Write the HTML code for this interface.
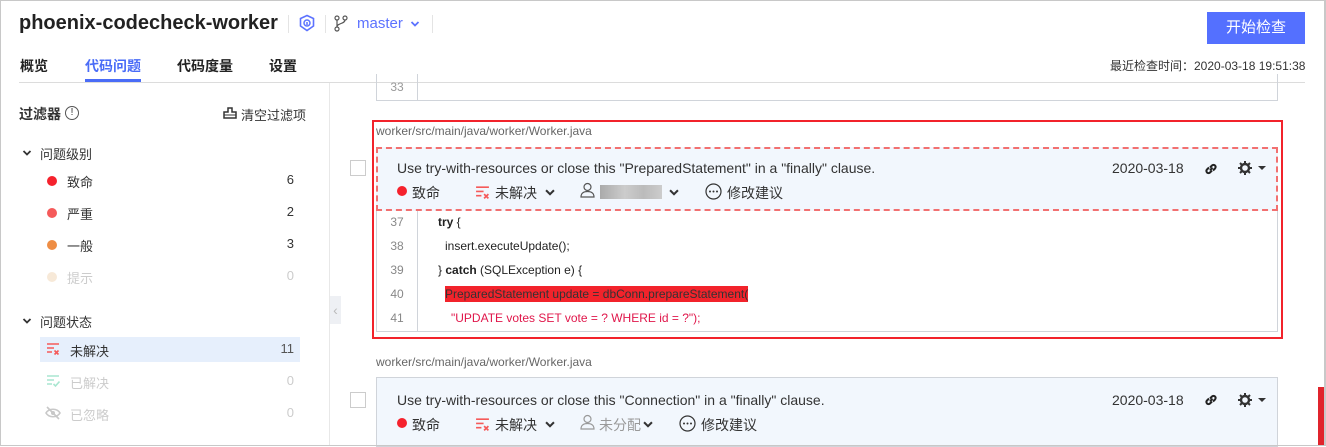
<!DOCTYPE html>
<html><head><meta charset="utf-8"><style>
*{box-sizing:border-box;margin:0;padding:0}
body{width:1326px;height:446px;overflow:hidden;background:#fff;font-family:"Liberation Sans","Noto Sans CJK SC",sans-serif;color:#333;position:relative;font-size:13px}
.a{position:absolute;white-space:nowrap}
.frame{position:absolute;left:0;top:0;width:1326px;height:446px;border:1px solid #c8c8c8;border-right:2px solid #c8c8c8}
.dot{position:absolute;width:10px;height:10px;border-radius:50%}
.cnt{position:absolute;left:280px;width:14px;text-align:right;font-size:13px}
.ln{position:absolute;left:377px;width:40px;text-align:center;color:#888;font-size:12px}
.code{position:absolute;font-size:12px;color:#222}
</style></head><body>
<div class="a" style="left:19px;top:12px;font-size:20px;font-weight:bold;color:#222">phoenix-codecheck-worker</div>
<div class="a" style="left:288px;top:15px;width:1px;height:18px;background:#e4e4e4"></div>
<svg class="a" style="left:298px;top:14px" width="18" height="18" viewBox="0 0 18 18"><path d="M9 1.5L15.5 4.5V12L9 16.5L2.5 12V4.5Z" fill="none" stroke="#5c72ff" stroke-width="1.6"/><circle cx="9" cy="9" r="3" fill="none" stroke="#5c72ff" stroke-width="1.5"/><path d="M9 8v3" stroke="#5c72ff" stroke-width="1.5"/></svg>
<div class="a" style="left:325px;top:15px;width:1px;height:18px;background:#e4e4e4"></div>
<svg class="a" style="left:334px;top:15px" width="14" height="17" viewBox="0 0 14 17"><circle cx="3" cy="3" r="2" fill="none" stroke="#555" stroke-width="1.2"/><circle cx="3" cy="14" r="2" fill="none" stroke="#555" stroke-width="1.2"/><circle cx="11" cy="3" r="2" fill="none" stroke="#555" stroke-width="1.2"/><path d="M3 5v7M11 5c0 4-8 3-8 7" fill="none" stroke="#555" stroke-width="1.2"/></svg>
<div class="a" style="left:357px;top:15px;font-size:15px;color:#5c72ff">master</div>
<svg class="a" style="left:410px;top:20px" width="10" height="8" viewBox="0 0 10 8"><path d="M1.5 2l3.5 3.5L8.5 2" fill="none" stroke="#5c72ff" stroke-width="1.8"/></svg>
<div class="a" style="left:432px;top:15px;width:1px;height:18px;background:#e4e4e4"></div>
<div class="a" style="left:1207px;top:12px;width:98px;height:32px;background:#5470ff;color:#fff;font-size:15px;text-align:center;line-height:32px">开始检查</div>
<div class="a" style="left:20px;top:56px;font-size:14px;font-weight:bold;color:#222">概览</div>
<div class="a" style="left:85px;top:56px;font-size:14px;font-weight:bold;color:#4a6cf7">代码问题</div>
<div class="a" style="left:85px;top:79px;width:56px;height:3px;background:#4a6cf7"></div>
<div class="a" style="left:177px;top:56px;font-size:14px;font-weight:bold;color:#222">代码度量</div>
<div class="a" style="left:269px;top:56px;font-size:14px;font-weight:bold;color:#222">设置</div>
<div class="a" style="left:1110px;top:57px;font-size:12px;color:#333">最近检查时间：2020-03-18 19:51:38</div>
<div class="a" style="left:19px;top:82px;width:1286px;height:1px;background:#dcdcdc"></div>
<div class="a" style="left:329px;top:83px;width:1px;height:363px;background:#e8e8e8"></div>
<div class="a" style="left:330px;top:296px;width:11px;height:28px;background:#eef0f4;color:#bbb;font-size:14px;line-height:28px;text-align:center">‹</div>
<!-- sidebar -->
<div class="a" style="left:19px;top:104px;font-size:14px;font-weight:bold;color:#333">过滤器</div>
<div class="a" style="left:65px;top:106px;width:14px;height:14px;border:1px solid #555;border-radius:50%;font-size:10px;text-align:center;line-height:12px">!</div>
<svg class="a" style="left:223px;top:107px" width="14" height="12" viewBox="0 0 14 12"><path d="M5 1h4v4H13v6H1V5h4z" fill="none" stroke="#333" stroke-width="1.5"/><path d="M1 8h12" stroke="#333"/></svg>
<div class="a" style="left:241px;top:105px;font-size:13px;color:#333">清空过滤项</div>
<svg class="a" style="left:22px;top:149px" width="10" height="8" viewBox="0 0 10 8"><path d="M1.5 2l3.5 3.5L8.5 2" fill="none" stroke="#333" stroke-width="1.8"/></svg>
<div class="a" style="left:40px;top:144px;font-size:13px;color:#333">问题级别</div>
<div class="dot" style="left:47px;top:176px;background:#f5222d"></div><div class="a" style="left:67px;top:172px;font-size:13px">致命</div><div class="cnt" style="top:172px">6</div>
<div class="dot" style="left:47px;top:208px;background:#f55a5a"></div><div class="a" style="left:67px;top:204px;font-size:13px">严重</div><div class="cnt" style="top:204px">2</div>
<div class="dot" style="left:47px;top:240px;background:#ee8d44"></div><div class="a" style="left:67px;top:236px;font-size:13px">一般</div><div class="cnt" style="top:236px">3</div>
<div class="dot" style="left:47px;top:272px;background:#f7e9d8"></div><div class="a" style="left:67px;top:268px;font-size:13px;color:#ccc">提示</div><div class="cnt" style="top:268px;color:#ccc">0</div>
<svg class="a" style="left:22px;top:317px" width="10" height="8" viewBox="0 0 10 8"><path d="M1.5 2l3.5 3.5L8.5 2" fill="none" stroke="#333" stroke-width="1.8"/></svg>
<div class="a" style="left:40px;top:312px;font-size:13px;color:#333">问题状态</div>
<div class="a" style="left:40px;top:337px;width:260px;height:25px;background:#e6effc"></div>
<svg class="a" style="left:46px;top:342px" width="14" height="14" viewBox="0 0 14 14"><path d="M1 2h12M1 6h7M1 10h5" stroke="#f55a5a" stroke-width="1.5"/><path d="M8.5 8.5l4 4M12.5 8.5l-4 4" stroke="#f55a5a" stroke-width="1.6"/></svg>
<div class="a" style="left:70px;top:341px;font-size:13px">未解决</div><div class="cnt" style="top:341px;color:#555">11</div>
<svg class="a" style="left:46px;top:374px" width="14" height="14" viewBox="0 0 14 14"><path d="M1 2h12M1 6h7M1 10h5" stroke="#a8e6d0" stroke-width="1.5"/><path d="M7.5 10l2 2 4-4.5" fill="none" stroke="#a8e6d0" stroke-width="1.6"/></svg>
<div class="a" style="left:70px;top:373px;font-size:13px;color:#ccc">已解决</div><div class="cnt" style="top:373px;color:#ccc">0</div>
<svg class="a" style="left:45px;top:406px" width="16" height="14" viewBox="0 0 16 14"><path d="M1 7c3-5 11-5 14 0c-3 5-11 5-14 0z" fill="none" stroke="#c8c8c8" stroke-width="1.6"/><circle cx="8" cy="7" r="2" fill="#c8c8c8"/><path d="M2 1l12 12" stroke="#c8c8c8" stroke-width="1.6"/></svg>
<div class="a" style="left:70px;top:405px;font-size:13px;color:#ccc">已忽略</div><div class="cnt" style="top:405px;color:#ccc">0</div>
<!-- main -->
<div class="a" style="left:376px;top:74px;width:902px;height:27px;border:1px solid #d0d4da;border-top:none"></div>
<div class="a" style="left:417px;top:74px;width:1px;height:26px;background:#d0d4da"></div>
<div class="a" style="left:377px;top:80px;width:40px;text-align:center;color:#999;font-size:12px">33</div>
<div class="a" style="left:372px;top:120px;width:911px;height:219px;border:2px solid #f2232b"></div>
<div class="a" style="left:376px;top:124px;font-size:12px;color:#666">worker/src/main/java/worker/Worker.java</div>
<div class="a" style="left:350px;top:160px;width:16px;height:16px;border:1px solid #ccc;background:#fff"></div>
<div class="a" style="left:376px;top:210px;width:902px;height:122px;border:1px solid #d0d4da;border-top:none"></div>
<div class="a" style="left:417px;top:210px;width:1px;height:121px;background:#d0d4da"></div>
<div class="a" style="left:376px;top:147px;width:902px;height:64px;background:#f2f7fd;border:2px dashed #f27070"></div>
<div class="a" style="left:397px;top:160px;font-size:14px;color:#333">Use try-with-resources or close this "PreparedStatement" in a "finally" clause.</div>
<div class="a" style="left:1112px;top:160px;font-size:14px;color:#333">2020-03-18</div>
<svg class="a" style="left:1203px;top:161px" width="16" height="16" viewBox="0 0 16 16"><path d="M7 9.5l2.5-3M6 6.5L4 8.5a2.1 2.1 0 003 3l2-2M10 9.5l2-2a2.1 2.1 0 00-3-3L7 6.5" fill="none" stroke="#222" stroke-width="2"/></svg>
<svg class="a" style="left:1237px;top:160px" width="30" height="16" viewBox="0 0 30 16"><circle cx="8" cy="8" r="4" fill="none" stroke="#333" stroke-width="2.4"/><path d="M8 1v3M8 12v3M1 8h3M12 8h3M3 3l2 2M11 11l2 2M13 3l-2 2M5 11l-2 2" stroke="#333" stroke-width="2"/><path d="M21 6h8l-4 4z" fill="#333"/></svg>
<div class="dot" style="left:397px;top:186px;background:#f5222d"></div>
<div class="a" style="left:412px;top:183px;font-size:14px">致命</div>
<svg class="a" style="left:475px;top:185px" width="15" height="15" viewBox="0 0 14 14"><path d="M1 2h12M1 6h7M1 10h5" stroke="#f55a5a" stroke-width="1.5"/><path d="M8.5 8.5l4 4M12.5 8.5l-4 4" stroke="#f55a5a" stroke-width="1.6"/></svg>
<div class="a" style="left:495px;top:183px;font-size:14px">未解决</div>
<svg class="a" style="left:544px;top:188px" width="12" height="9" viewBox="0 0 10 8"><path d="M1.5 2l3.5 3.5L8.5 2" fill="none" stroke="#333" stroke-width="1.8"/></svg>
<svg class="a" style="left:580px;top:182px" width="15" height="16" viewBox="0 0 15 16"><circle cx="7.5" cy="5" r="3.5" fill="none" stroke="#555" stroke-width="1.2"/><path d="M1 15c0-4 3-5.5 6.5-5.5S14 11 14 15z" fill="none" stroke="#555" stroke-width="1.2"/></svg>
<div class="a" style="left:600px;top:185px;width:62px;height:14px;background:linear-gradient(90deg,#aaa,#ccc 40%,#bbb 70%,#ccc)"></div>
<svg class="a" style="left:668px;top:188px" width="12" height="9" viewBox="0 0 10 8"><path d="M1.5 2l3.5 3.5L8.5 2" fill="none" stroke="#333" stroke-width="1.8"/></svg>
<svg class="a" style="left:705px;top:183px" width="17" height="17" viewBox="0 0 17 17"><circle cx="8.5" cy="8.5" r="7.5" fill="none" stroke="#333" stroke-width="1.2"/><circle cx="5" cy="8.5" r="1" fill="#333"/><circle cx="8.5" cy="8.5" r="1" fill="#333"/><circle cx="12" cy="8.5" r="1" fill="#333"/></svg>
<div class="a" style="left:727px;top:183px;font-size:14px">修改建议</div>
<div class="ln" style="top:215px">37</div><div class="code" style="left:438px;top:215px"><b>try</b> {</div>
<div class="ln" style="top:239px">38</div><div class="code" style="left:445px;top:239px">insert.executeUpdate();</div>
<div class="ln" style="top:263px">39</div><div class="code" style="left:438px;top:263px">} <b>catch</b> (SQLException e) {</div>
<div class="ln" style="top:287px">40</div><div class="code" style="left:445px;top:286px;background:#f2232b;color:#333;padding:1px 0">PreparedStatement update = dbConn.prepareStatement(</div>
<div class="ln" style="top:311px">41</div><div class="code" style="left:451px;top:311px;color:#e0174b">"UPDATE votes SET vote = ? WHERE id = ?");</div>
<!-- second -->
<div class="a" style="left:376px;top:355px;font-size:12px;color:#666">worker/src/main/java/worker/Worker.java</div>
<div class="a" style="left:350px;top:392px;width:16px;height:16px;border:1px solid #ccc;background:#fff"></div>
<div class="a" style="left:376px;top:377px;width:902px;height:70px;background:#f2f7fd;border:1px solid #d0d4da"></div>
<div class="a" style="left:397px;top:392px;font-size:14px;color:#333">Use try-with-resources or close this "Connection" in a "finally" clause.</div>
<div class="a" style="left:1112px;top:392px;font-size:14px;color:#333">2020-03-18</div>
<svg class="a" style="left:1203px;top:392px" width="16" height="16" viewBox="0 0 16 16"><path d="M7 9.5l2.5-3M6 6.5L4 8.5a2.1 2.1 0 003 3l2-2M10 9.5l2-2a2.1 2.1 0 00-3-3L7 6.5" fill="none" stroke="#222" stroke-width="2"/></svg>
<svg class="a" style="left:1237px;top:392px" width="30" height="16" viewBox="0 0 30 16"><circle cx="8" cy="8" r="4" fill="none" stroke="#333" stroke-width="2.4"/><path d="M8 1v3M8 12v3M1 8h3M12 8h3M3 3l2 2M11 11l2 2M13 3l-2 2M5 11l-2 2" stroke="#333" stroke-width="2"/><path d="M21 6h8l-4 4z" fill="#333"/></svg>
<div class="dot" style="left:397px;top:418px;background:#f5222d"></div>
<div class="a" style="left:412px;top:415px;font-size:14px">致命</div>
<svg class="a" style="left:475px;top:417px" width="15" height="15" viewBox="0 0 14 14"><path d="M1 2h12M1 6h7M1 10h5" stroke="#f55a5a" stroke-width="1.5"/><path d="M8.5 8.5l4 4M12.5 8.5l-4 4" stroke="#f55a5a" stroke-width="1.6"/></svg>
<div class="a" style="left:495px;top:415px;font-size:14px">未解决</div>
<svg class="a" style="left:544px;top:420px" width="12" height="9" viewBox="0 0 10 8"><path d="M1.5 2l3.5 3.5L8.5 2" fill="none" stroke="#333" stroke-width="1.8"/></svg>
<svg class="a" style="left:580px;top:414px" width="15" height="16" viewBox="0 0 15 16"><circle cx="7.5" cy="5" r="3.5" fill="none" stroke="#999" stroke-width="1.2"/><path d="M1 15c0-4 3-5.5 6.5-5.5S14 11 14 15z" fill="none" stroke="#999" stroke-width="1.2"/></svg>
<div class="a" style="left:599px;top:415px;font-size:14px;color:#999">未分配</div>
<svg class="a" style="left:642px;top:420px" width="12" height="9" viewBox="0 0 10 8"><path d="M1.5 2l3.5 3.5L8.5 2" fill="none" stroke="#333" stroke-width="1.8"/></svg>
<svg class="a" style="left:679px;top:415px" width="17" height="17" viewBox="0 0 17 17"><circle cx="8.5" cy="8.5" r="7.5" fill="none" stroke="#333" stroke-width="1.2"/><circle cx="5" cy="8.5" r="1" fill="#333"/><circle cx="8.5" cy="8.5" r="1" fill="#333"/><circle cx="12" cy="8.5" r="1" fill="#333"/></svg>
<div class="a" style="left:701px;top:415px;font-size:14px">修改建议</div>
<div class="a" style="left:1318px;top:387px;width:8px;height:59px;background:#e0242c"></div>
<div class="frame"></div>
</body></html>
